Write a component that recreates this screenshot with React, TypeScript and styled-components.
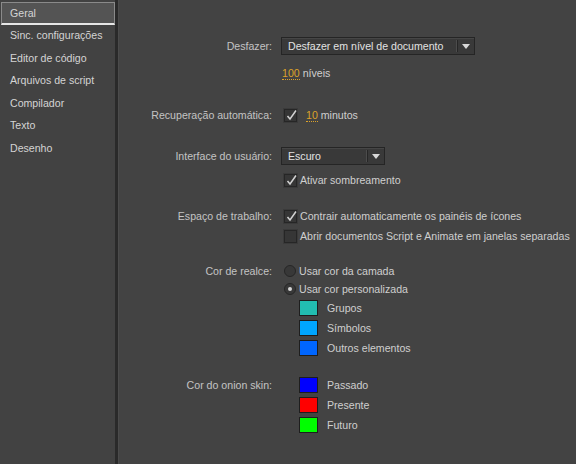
import React from 'react';
import styled, { createGlobalStyle } from 'styled-components';

const GlobalStyle = createGlobalStyle`
  html, body {
    margin: 0;
    padding: 0;
    background: #434343;
  }
  body {
    font-family: "Liberation Sans", Arial, sans-serif;
    font-size: 10.6px;
    color: #c8c8c8;
  }
`;

const Window = styled.div`
  display: flex;
  width: 576px;
  height: 464px;
  overflow: hidden;
  background: #434343;
`;

const Sidebar = styled.nav`
  width: 115px;
  flex: none;
  padding-top: 2px;
  background: #424242;
  display: flex;
  flex-direction: column;
`;

const NavItem = styled.div<{ $active?: boolean }>`
  height: 22.5px;
  box-sizing: border-box;
  display: flex;
  align-items: center;
  padding-left: 8px;
  color: #d4d4d4;
  border: 1px solid ${({ $active }) => ($active ? '#8a8a8a' : 'transparent')};
  border-bottom: 2px solid ${({ $active }) => ($active ? '#e6e6e6' : 'transparent')};
  background: ${({ $active }) => ($active ? '#545454' : 'transparent')};
  margin-left: 1px;
`;

const Divider = styled.div`
  width: 3px;
  flex: none;
  background: #2a2a2a;
  border-right: 1px solid #4b4b4b;
`;

const Main = styled.main`
  flex: 1;
  padding-top: 36px;
`;

const Section = styled.section<{ $top?: number }>`
  display: grid;
  grid-template-columns: 153px auto;
  column-gap: 9px;
  justify-content: start;
  margin-top: ${({ $top }) => $top ?? 0}px;
`;

const Label = styled.div`
  grid-column: 1;
  grid-row: 1;
  align-self: center;
  text-align: right;
  white-space: nowrap;
  color: #c4c4c4;
`;

const Row = styled.div<{ $h?: number; $indent?: number }>`
  grid-column: 2;
  height: ${({ $h }) => $h ?? 20}px;
  display: flex;
  align-items: center;
  gap: 3px;
  padding-left: ${({ $indent }) => $indent ?? 0}px;
  white-space: nowrap;
  color: #cfcfcf;
`;

const Select = styled.div<{ $w: number }>`
  width: ${({ $w }) => $w}px;
  height: 18px;
  box-sizing: border-box;
  display: flex;
  align-items: center;
  background: #393939;
  border: 1px solid #252525;
  box-shadow: inset 0 1px 0 #464646;
  color: #e2e2e2;
`;

const SelectText = styled.span`
  flex: 1;
  padding-left: 6px;
`;

const SelectArrow = styled.span`
  width: 16px;
  height: 12px;
  border-left: 1px solid #262626;
  box-shadow: -1px 0 0 #4c4c4c;
  display: flex;
  align-items: center;
  justify-content: center;
  &::after {
    content: '';
    border-left: 4px solid transparent;
    border-right: 4px solid transparent;
    border-top: 5px solid #d8d8d8;
  }
`;

const Number = styled.span`
  color: #dca22a;
  border-bottom: 1px dotted #dca22a;
  line-height: 12px;
`;

const Spacer = styled.span`
  width: 3px;
  flex: none;
`;

const Box = styled.span`
  width: 13px;
  height: 13px;
  box-sizing: border-box;
  flex: none;
  position: relative;
  background: #363636;
  border: 1px solid #262626;
  box-shadow: 0 0 0 1px #3a3a3a;
  margin-left: 3px;
  svg {
    position: absolute;
    left: 0;
    top: -2px;
  }
`;

const Radio = styled.span<{ $on?: boolean }>`
  width: 12px;
  height: 12px;
  box-sizing: border-box;
  flex: none;
  border-radius: 50%;
  margin-left: 3px;
  background: #383838;
  border: 1px solid #262626;
  display: flex;
  align-items: center;
  justify-content: center;
  &::after {
    content: '';
    width: 4px;
    height: 4px;
    border-radius: 50%;
    background: ${({ $on }) => ($on ? '#d6d6d6' : 'transparent')};
  }
`;

const Swatch = styled.span<{ $c: string }>`
  width: 19px;
  height: 16px;
  box-sizing: border-box;
  flex: none;
  background: ${({ $c }) => $c};
  border: 1px solid #1e1e1e;
  margin-left: 18px;
  margin-right: 6px;
`;

const Check = ({ on }: { on?: boolean }) => (
  <Box>
    {on && (
      <svg width="13" height="14" viewBox="0 0 13 14">
        <path d="M2.5 8 L5 11 L11 2.5" fill="none" stroke="#d2d2d2" strokeWidth="1.5" />
      </svg>
    )}
  </Box>
);

const nav = ['Geral', 'Sinc. configurações', 'Editor de código', 'Arquivos de script', 'Compilador', 'Texto', 'Desenho'];

export default function App() {
  return (
    <>
      <GlobalStyle />
      <Window>
        <Sidebar>
          {nav.map((n, i) => (
            <NavItem key={n} $active={i === 0}>{n}</NavItem>
          ))}
        </Sidebar>
        <Divider />
        <Main>
          <Section>
            <Label>Desfazer:</Label>
            <Row>
              <Select $w={194}>
                <SelectText>Desfazer em nível de documento</SelectText>
                <SelectArrow />
              </Select>
            </Row>
            <Row $indent={1} style={{ marginTop: 7 }}>
              <Number>100</Number>níveis
            </Row>
          </Section>

          <Section $top={22}>
            <Label>Recuperação automática:</Label>
            <Row>
              <Check on />
              <Spacer />
              <Number>10</Number>minutos
            </Row>
          </Section>

          <Section $top={21}>
            <Label>Interface do usuário:</Label>
            <Row>
              <Select $w={104}>
                <SelectText>Escuro</SelectText>
                <SelectArrow />
              </Select>
            </Row>
            <Row style={{ marginTop: 4 }}>
              <Check on />Ativar sombreamento
            </Row>
          </Section>

          <Section $top={16}>
            <Label>Espaço de trabalho:</Label>
            <Row>
              <Check on />Contrair automaticamente os painéis de ícones
            </Row>
            <Row>
              <Check />Abrir documentos Script e Animate em janelas separadas
            </Row>
          </Section>

          <Section $top={16}>
            <Label>Cor de realce:</Label>
            <Row $h={18}>
              <Radio />Usar cor da camada
            </Row>
            <Row $h={18}>
              <Radio $on />Usar cor personalizada
            </Row>
            <Row>
              <Swatch $c="#22bdb1" />Grupos
            </Row>
            <Row>
              <Swatch $c="#00a6ff" />Símbolos
            </Row>
            <Row>
              <Swatch $c="#0066ff" />Outros elementos
            </Row>
          </Section>

          <Section $top={17}>
            <Label>Cor do onion skin:</Label>
            <Row>
              <Swatch $c="#0000ff" />Passado
            </Row>
            <Row>
              <Swatch $c="#ff0000" />Presente
            </Row>
            <Row>
              <Swatch $c="#00ff00" />Futuro
            </Row>
          </Section>
        </Main>
      </Window>
    </>
  );
}
